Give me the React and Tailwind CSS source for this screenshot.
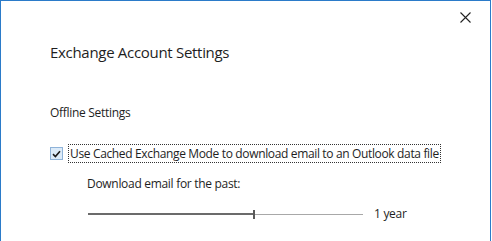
import React from 'react';

const font = { fontFamily: '"Open Sans", "Noto Sans", sans-serif' };

const Checkbox = () => (
  <span className="flex h-[13px] w-[13px] shrink-0 items-center justify-center border border-[#8fb3d9] bg-[#dcebf9]">
    <svg width="9" height="8" viewBox="0 0 9 8">
      <path d="M1 4.2 L3.4 6.5 L8 1.2" fill="none" stroke="#1a1a1a" strokeWidth="1.6" />
    </svg>
  </span>
);

export default function App() {
  return (
    <div className="h-[241px] w-[492px] bg-white" style={font}>
      <div className="flex h-full w-[491px] flex-col border-x border-t border-[#2b7bc9] text-[#1e1e1e]">
        <div className="flex justify-end pr-[19px] pt-[11px]">
          <svg width="11" height="11" viewBox="0 0 11 11">
            <path d="M0.5 0.5 L10.5 10.5 M10.5 0.5 L0.5 10.5" stroke="#222" strokeWidth="1.1" />
          </svg>
        </div>
        <h1 className="ml-[49px] mt-[19px] text-[15px] leading-[20px] tracking-[-0.3px]">Exchange Account Settings</h1>
        <div className="ml-[49px] mt-[43px] text-[12px] leading-[16px] tracking-[-0.3px]">Offline Settings</div>
        <div className="ml-[49px] mt-[23px] flex items-center gap-[5px]">
          <Checkbox />
          <span className="border border-dotted border-[#333] px-[1px] text-[12px] leading-[17px] tracking-[-0.35px]">
            Use Cached Exchange Mode to download email to an Outlook data file
          </span>
        </div>
        <div className="ml-[86px] mt-[13px] text-[12px] leading-[16px] tracking-[-0.3px]">Download email for the past:</div>
        <div className="ml-[87px] mt-[14px] flex items-center">
          <div className="h-[2px] w-[165px] bg-[#6b6b6b]" />
          <div className="h-[9px] w-[2px] bg-[#5a5a5a]" />
          <div className="h-[1px] w-[108px] bg-[#a8a8a8]" />
          <span className="ml-[11px] text-[12px] leading-[16px] tracking-[-0.3px]">1 year</span>
        </div>
      </div>
    </div>
  );
}
